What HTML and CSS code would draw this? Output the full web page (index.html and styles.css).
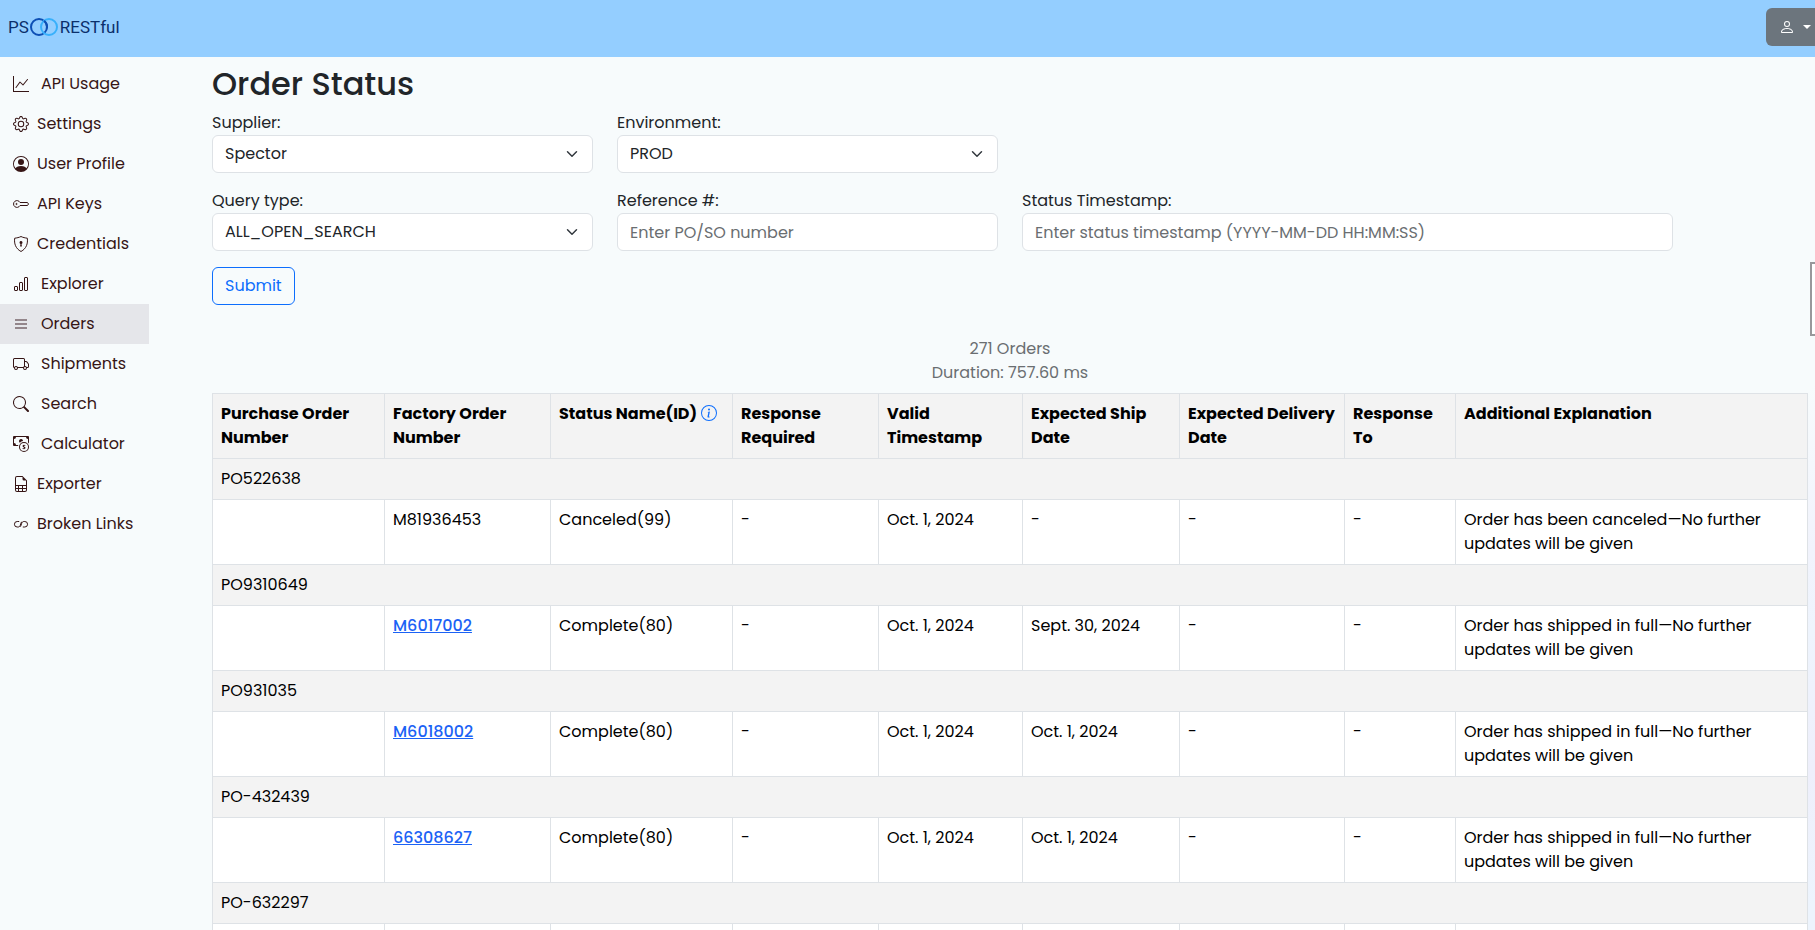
FILE: index.html
```html
<!DOCTYPE html>
<html lang="en">
<head>
<meta charset="UTF-8">
<meta name="viewport" content="width=device-width, initial-scale=1.0">
<title>Order Status</title>
<link rel="stylesheet" href="styles.css">
</head>
<body>
<header class="topbar">
    <a class="logo" href="#">
        <span>PS</span>
        <svg width="30" height="20" viewBox="0 0 30 20" fill="none" stroke-width="2">
            <circle cx="10" cy="10" r="8" stroke="#0d4fb5"/>
            <circle cx="20" cy="10" r="8" stroke="#38b0fb"/>
            <path d="M15 3.8a8 8 0 0 1 2.9 7.5" stroke="#0d4fb5"/>
        </svg>
        <span>RESTful</span>
    </a>
    <button class="user-btn" type="button" aria-label="Account">
        <svg width="16" height="16" viewBox="0 0 16 16" fill="currentColor"><path d="M8 8a3 3 0 1 0 0-6 3 3 0 0 0 0 6m2-3a2 2 0 1 1-4 0 2 2 0 0 1 4 0m4 8c0 1-1 1-1 1H3s-1 0-1-1 1-4 6-4 6 3 6 4m-1-.004c-.001-.246-.154-.986-.832-1.664C11.516 10.68 10.289 10 8 10s-3.516.68-4.168 1.332c-.678.678-.83 1.418-.832 1.664z"/></svg>
        <span class="caret"></span>
    </button>
</header>

<div class="page">
    <nav class="sidebar">
        <a class="wide" href="#"><svg viewBox="0 0 16 16"><path d="M0 0h1v15h15v1H0zm14.817 3.113a.5.5 0 0 1 .07.704l-4.5 5.5a.5.5 0 0 1-.74.037L7.06 6.767l-3.656 5.027a.5.5 0 0 1-.808-.588l4-5.5a.5.5 0 0 1 .758-.06l2.609 2.61 4.15-5.073a.5.5 0 0 1 .704-.07"/></svg>API Usage</a>
        <a href="#"><svg viewBox="0 0 16 16"><path d="M8 4.754a3.246 3.246 0 1 0 0 6.492 3.246 3.246 0 0 0 0-6.492M5.754 8a2.246 2.246 0 1 1 4.492 0 2.246 2.246 0 0 1-4.492 0"/><path d="M9.796 1.343c-.527-1.79-3.065-1.79-3.592 0l-.094.319a.873.873 0 0 1-1.255.52l-.292-.16c-1.64-.892-3.433.902-2.54 2.541l.159.292a.873.873 0 0 1-.52 1.255l-.319.094c-1.79.527-1.79 3.065 0 3.592l.319.094a.873.873 0 0 1 .52 1.255l-.16.292c-.892 1.64.901 3.434 2.541 2.54l.292-.159a.873.873 0 0 1 1.255.52l.094.319c.527 1.79 3.065 1.79 3.592 0l.094-.319a.873.873 0 0 1 1.255-.52l.292.16c1.64.893 3.434-.902 2.54-2.541l-.159-.292a.873.873 0 0 1 .52-1.255l.319-.094c1.79-.527 1.79-3.065 0-3.592l-.319-.094a.873.873 0 0 1-.52-1.255l.16-.292c.893-1.64-.902-3.433-2.541-2.54l-.292.159a.873.873 0 0 1-1.255-.52zm-2.633.283c.246-.835 1.428-.835 1.674 0l.094.319a1.873 1.873 0 0 0 2.693 1.115l.291-.16c.764-.415 1.6.42 1.184 1.185l-.159.292a1.873 1.873 0 0 0 1.116 2.692l.318.094c.835.246.835 1.428 0 1.674l-.319.094a1.873 1.873 0 0 0-1.115 2.693l.16.291c.415.764-.42 1.6-1.185 1.184l-.291-.159a1.873 1.873 0 0 0-2.693 1.116l-.094.318c-.246.835-1.428.835-1.674 0l-.094-.319a1.873 1.873 0 0 0-2.692-1.115l-.292.16c-.764.415-1.6-.42-1.184-1.185l.159-.291A1.873 1.873 0 0 0 1.945 8.93l-.319-.094c-.835-.246-.835-1.428 0-1.674l.319-.094A1.873 1.873 0 0 0 3.06 4.377l-.16-.292c-.415-.764.42-1.6 1.185-1.184l.292.159a1.873 1.873 0 0 0 2.692-1.115z"/></svg>Settings</a>
        <a href="#"><svg viewBox="0 0 16 16"><path d="M11 6a3 3 0 1 1-6 0 3 3 0 0 1 6 0"/><path fill-rule="evenodd" d="M0 8a8 8 0 1 1 16 0A8 8 0 0 1 0 8m8-7a7 7 0 0 0-5.468 11.37C3.242 11.226 4.805 10 8 10s4.757 1.225 5.468 2.37A7 7 0 0 0 8 1"/></svg>User Profile</a>
        <a href="#"><svg class="line" viewBox="0 0 16 16"><path d="M7 6.5A3.4 3.4 0 1 0 7 9.5h7.500l1-1.500-1-1.500z"/><circle cx="3.5" cy="8" r=".6"/></svg>API Keys</a>
        <a href="#"><svg class="line" viewBox="0 0 16 16"><path d="M8 .5C6.500 1.400 3.500 2 1.700 2.200 1 7.500 2.500 12.500 8 15.500c5.500-3 7-8 6.300-13.300C12.500 2 9.500 1.400 8 .5z"/><path class="solid" d="M9.500 6.500a1.500 1.500 0 0 1-1 1.415l.385 1.990a.5.5 0 0 1-.491.595h-.788a.5.5 0 0 1-.490-.595l.384-1.990a1.500 1.500 0 1 1 2-1.415"/></svg>Credentials</a>
        <a class="wide" href="#"><svg class="line" viewBox="0 0 16 16"><rect x="1.500" y="10.500" width="3" height="4" rx=".5"/><rect x="6.500" y="6.500" width="3" height="8" rx=".5"/><rect x="11.500" y="1.500" width="3" height="13" rx=".5"/></svg>Explorer</a>
        <a class="wide active" href="#"><svg class="bars" viewBox="0 0 16 16"><path d="M2 4h12M2 8h12M2 12h12"/></svg>Orders</a>
        <a class="wide" href="#"><svg viewBox="0 0 16 16"><path d="M0 3.500A1.500 1.500 0 0 1 1.500 2h9A1.500 1.500 0 0 1 12 3.500V5h1.020a1.500 1.500 0 0 1 1.170.563l1.481 1.850a1.500 1.500 0 0 1 .329.938V10.500a1.500 1.500 0 0 1-1.500 1.500H14a2 2 0 1 1-4 0H5a2 2 0 1 1-3.998-.085A1.500 1.500 0 0 1 0 10.500zm1.294 7.456A2 2 0 0 1 4.732 11h5.536a2 2 0 0 1 .732-.732V3.500a.5.5 0 0 0-.5-.5h-9a.5.5 0 0 0-.5.5v7a.5.5 0 0 0 .294.456M12 10a2 2 0 0 1 1.732 1h.768a.5.5 0 0 0 .5-.5V8.350a.5.5 0 0 0-.110-.312l-1.480-1.850A.5.5 0 0 0 13.020 6H12zm-9 1a1 1 0 1 0 0 2 1 1 0 0 0 0-2m9 0a1 1 0 1 0 0 2 1 1 0 0 0 0-2"/></svg>Shipments</a>
        <a class="wide" href="#"><svg viewBox="0 0 16 16"><path d="M11.742 10.344a6.500 6.500 0 1 0-1.397 1.398h-.001q.044.060.098.115l3.850 3.850a1 1 0 0 0 1.415-1.414l-3.850-3.850a1 1 0 0 0-.115-.100zM12 6.500a5.500 5.500 0 1 1-11 0 5.500 5.500 0 0 1 11 0"/></svg>Search</a>
        <a class="wide" href="#"><svg viewBox="0 0 16 16"><path fill-rule="evenodd" d="M11 15a4 4 0 1 0 0-8 4 4 0 0 0 0 8m5-4a5 5 0 1 1-10 0 5 5 0 0 1 10 0"/><path d="M9.438 11.944c.047.596.518 1.060 1.363 1.116v.440h.375v-.443c.875-.061 1.386-.529 1.386-1.207 0-.618-.390-.936-1.090-1.100l-.296-.070v-1.200c.376.043.614.248.671.532h.658c-.047-.575-.540-1.024-1.329-1.073V8.500h-.375v.450c-.747.073-1.255.522-1.255 1.158 0 .562.378.920 1.007 1.066l.248.061v1.272c-.384-.058-.639-.270-.696-.563z"/><path d="M1 0a1 1 0 0 0-1 1v8a1 1 0 0 0 1 1h4.083q.088-.517.258-1H3a2 2 0 0 0-2-2V3a2 2 0 0 0 2-2h10a2 2 0 0 0 2 2v3.528c.380.340.717.728 1 1.154V1a1 1 0 0 0-1-1z"/><path d="M9.998 5.083 10 5a2 2 0 1 0-3.132 1.650 6 6 0 0 1 3.130-1.567"/></svg>Calculator</a>
        <a href="#"><svg viewBox="0 0 16 16"><path d="M14 14V4.500L9.500 0H4a2 2 0 0 0-2 2v12a2 2 0 0 0 2 2h8a2 2 0 0 0 2-2M9.500 3A1.500 1.500 0 0 0 11 4.500h2V9H3V2a1 1 0 0 1 1-1h5.500zM3 12v-2h2v2zm0 1h2v2H4a1 1 0 0 1-1-1zm3 2v-2h3v2zm4 0v-2h3v1a1 1 0 0 1-1 1zm3-3h-3v-2h3zm-7 0v-2h3v2z"/></svg>Exporter</a>
        <a href="#"><svg class="line" viewBox="0 0 16 16"><path d="M8.500 5.800 7.300 9.200C7 10.200 6.300 11 5.200 11h-1a2.700 2.700 0 0 1 0-5.500h2M7.500 10.700l1.200-3.400c.3-1 1-1.800 2.100-1.800h1a2.700 2.700 0 0 1 0 5.500h-2"/></svg>Broken Links</a>
    </nav>

    <main class="content">
        <h1>Order Status</h1>
        <form class="filters" onsubmit="return false">
            <div class="field">
                <label for="supplier">Supplier:</label>
                <select id="supplier"><option>Spector</option></select>
            </div>
            <div class="field">
                <label for="environment">Environment:</label>
                <select id="environment"><option>PROD</option><option>TEST</option></select>
            </div>
            <div class="field first">
                <label for="query">Query type:</label>
                <select id="query"><option>ALL_OPEN_SEARCH</option></select>
            </div>
            <div class="field">
                <label for="reference">Reference #:</label>
                <input id="reference" type="text" placeholder="Enter PO/SO number">
            </div>
            <div class="field long">
                <label for="timestamp">Status Timestamp:</label>
                <input id="timestamp" type="text" placeholder="Enter status timestamp (YYYY-MM-DD HH:MM:SS)">
            </div>
            <button class="submit" type="submit">Submit</button>
        </form>

        <div class="summary">
            <div>271 Orders</div>
            <div>Duration: 757.60 ms</div>
        </div>

        <table class="orders">
            <colgroup>
                <col class="c-po"><col class="c-factory"><col class="c-status"><col class="c-required"><col class="c-valid"><col class="c-ship"><col class="c-delivery"><col class="c-to"><col>
            </colgroup>
            <thead>
                <tr>
                    <th>Purchase Order Number</th>
                    <th>Factory Order Number</th>
                    <th class="nowrap">Status Name(ID) <svg class="info" viewBox="0 0 16 16"><path d="M8 15A7 7 0 1 1 8 1a7 7 0 0 1 0 14m0 1A8 8 0 1 0 8 0a8 8 0 0 0 0 16"/><path d="m8.930 6.588-2.290.287-.082.380.450.083c.294.070.352.176.288.469l-.738 3.468c-.194.897.105 1.319.808 1.319.545 0 1.178-.252 1.465-.598l.088-.416c-.200.176-.492.246-.686.246-.275 0-.375-.193-.304-.533zM9 4.500a1 1 0 1 1-2 0 1 1 0 0 1 2 0"/></svg></th>
                    <th>Response Required</th>
                    <th>Valid Timestamp</th>
                    <th>Expected Ship Date</th>
                    <th>Expected Delivery Date</th>
                    <th>Response To</th>
                    <th>Additional Explanation</th>
                </tr>
            </thead>
            <tbody>
                <tr class="group"><td colspan="9">PO522638</td></tr>
                <tr><td></td><td>M81936453</td><td>Canceled(99)</td><td>-</td><td>Oct. 1, 2024</td><td>-</td><td>-</td><td>-</td><td>Order has been canceled—No further updates will be given</td></tr>
                <tr class="group"><td colspan="9">PO9310649</td></tr>
                <tr><td></td><td><a href="#">M6017002</a></td><td>Complete(80)</td><td>-</td><td>Oct. 1, 2024</td><td>Sept. 30, 2024</td><td>-</td><td>-</td><td>Order has shipped in full—No further updates will be given</td></tr>
                <tr class="group"><td colspan="9">PO931035</td></tr>
                <tr><td></td><td><a href="#">M6018002</a></td><td>Complete(80)</td><td>-</td><td>Oct. 1, 2024</td><td>Oct. 1, 2024</td><td>-</td><td>-</td><td>Order has shipped in full—No further updates will be given</td></tr>
                <tr class="group"><td colspan="9">PO-432439</td></tr>
                <tr><td></td><td><a href="#">66308627</a></td><td>Complete(80)</td><td>-</td><td>Oct. 1, 2024</td><td>Oct. 1, 2024</td><td>-</td><td>-</td><td>Order has shipped in full—No further updates will be given</td></tr>
                <tr class="group"><td colspan="9">PO-632297</td></tr>
                <tr class="tall"><td></td><td></td><td></td><td></td><td></td><td></td><td></td><td></td><td></td></tr>
            </tbody>
        </table>
    </main>
</div>
<div class="side-tab"></div>
</body>
</html>
```
FILE: styles.css
```css
* {
  box-sizing: border-box;
}

body {
  margin: 0;
  height: 100vh;
  overflow: hidden;
  position: relative;
  font-family: Poppins, Inter, "Liberation Sans", sans-serif;
  font-size: 16px;
  line-height: 24px;
  color: #212529;
  background: linear-gradient(135deg, #f7fbfc 80%, #f1f3fc 86%, #eef4fd 89%, #eeeffb 94%, #edf4fd 99%);
}

.topbar {
  height: 57px;
  display: flex;
  justify-content: space-between;
  align-items: flex-start;
  padding: 8px 0 8px 8px;
  background: #94ceff;
}

.logo {
  display: flex;
  align-items: center;
  height: 38px;
  font-family: Roboto, sans-serif;
  font-size: 17px;
  color: #0b2f6b;
  text-decoration: none;
}

.logo svg {
  margin-right: 1px;
}

.user-btn {
  display: flex;
  align-items: center;
  gap: 8px;
  height: 38px;
  margin-right: -9px;
  padding: 0 13px;
  border: 0;
  border-radius: 6px;
  color: #fff;
  background: #6c757d;
}

.caret {
  border-top: 4px solid #fff;
  border-left: 4px solid transparent;
  border-right: 4px solid transparent;
}

.page {
  display: flex;
  padding: 7px 7px 0 0;
}

.sidebar {
  flex: 0 0 149px;
  margin-right: 63px;
}

.sidebar a {
  display: flex;
  align-items: center;
  gap: 8px;
  height: 40px;
  padding-left: 13px;
  color: #361515;
  text-decoration: none;
  white-space: nowrap;
}

.sidebar a.wide {
  gap: 12px;
}

.sidebar a.active {
  background: #e5e6ea;
}

.sidebar svg {
  width: 16px;
  height: 16px;
  fill: currentColor;
}

.sidebar svg.line {
  fill: none;
  stroke: currentColor;
}

.sidebar svg .solid {
  fill: currentColor;
  stroke: none;
}

.sidebar svg.bars {
  stroke: #93868b;
  stroke-width: 2;
}

.content {
  flex: 1;
  min-width: 0;
}

h1 {
  margin: 0 0 8px;
  font-size: 32px;
  line-height: 39px;
  font-weight: 500;
}

.filters {
  display: grid;
  grid-template-columns: repeat(12, 1fr);
  gap: 16px 24px;
}

.field {
  grid-column: span 3;
}

.field.first {
  grid-column: 1 / span 3;
}

.field.long {
  grid-column: span 5;
}

.field label {
  display: block;
}

.field select,
.field input {
  display: block;
  width: 100%;
  height: 38px;
  padding: 0 12px;
  border: 1px solid #dee2e6;
  border-radius: 6px;
  font: inherit;
  color: #212529;
  background: #fff;
}

.field select {
  appearance: none;
  background: #fff url("data:image/svg+xml,%3csvg xmlns='http://www.w3.org/2000/svg' viewBox='0 0 16 16'%3e%3cpath fill='none' stroke='%23343a40' stroke-linecap='round' stroke-linejoin='round' stroke-width='2' d='m2 5 6 6 6-6'/%3e%3c/svg%3e") no-repeat right 12px center / 16px 12px;
}

.field input::placeholder {
  color: #6a6e71;
  opacity: 1;
}

.submit {
  grid-column: 1 / -1;
  justify-self: start;
  height: 38px;
  padding: 0 12px;
  border: 1px solid #0d6efd;
  border-radius: 6px;
  font: inherit;
  color: #0d6efd;
  background: transparent;
}

.summary {
  margin: 32px 0 8px;
  text-align: center;
  color: #6a6e71;
}

.orders {
  width: 100%;
  table-layout: fixed;
  border-collapse: collapse;
  color: #000;
  background: #fff;
}

.c-po { width: 172px; }
.c-factory { width: 166px; }
.c-status { width: 182px; }
.c-required { width: 146px; }
.c-valid { width: 144px; }
.c-ship { width: 157px; }
.c-delivery { width: 165px; }
.c-to { width: 111px; }

.orders th,
.orders td {
  padding: 8px;
  border: 1px solid #dee2e6;
  text-align: left;
  vertical-align: top;
}

.orders th {
  font-weight: 700;
}

.orders thead tr,
.orders .group {
  background: #f3f3f3;
}

.orders .tall td {
  height: 65px;
}

.orders a {
  font-weight: 500;
  color: #1b62f5;
}

.nowrap {
  white-space: nowrap;
}

.info {
  width: 16px;
  height: 16px;
  vertical-align: -2px;
  fill: #0d6efd;
}

/* tab sticking out of the right edge */
.side-tab {
  position: absolute;
  top: 262px;
  right: -40px;
  width: 45px;
  height: 74px;
  border: 2px solid #98989b;
  background: #fff;
}
```
